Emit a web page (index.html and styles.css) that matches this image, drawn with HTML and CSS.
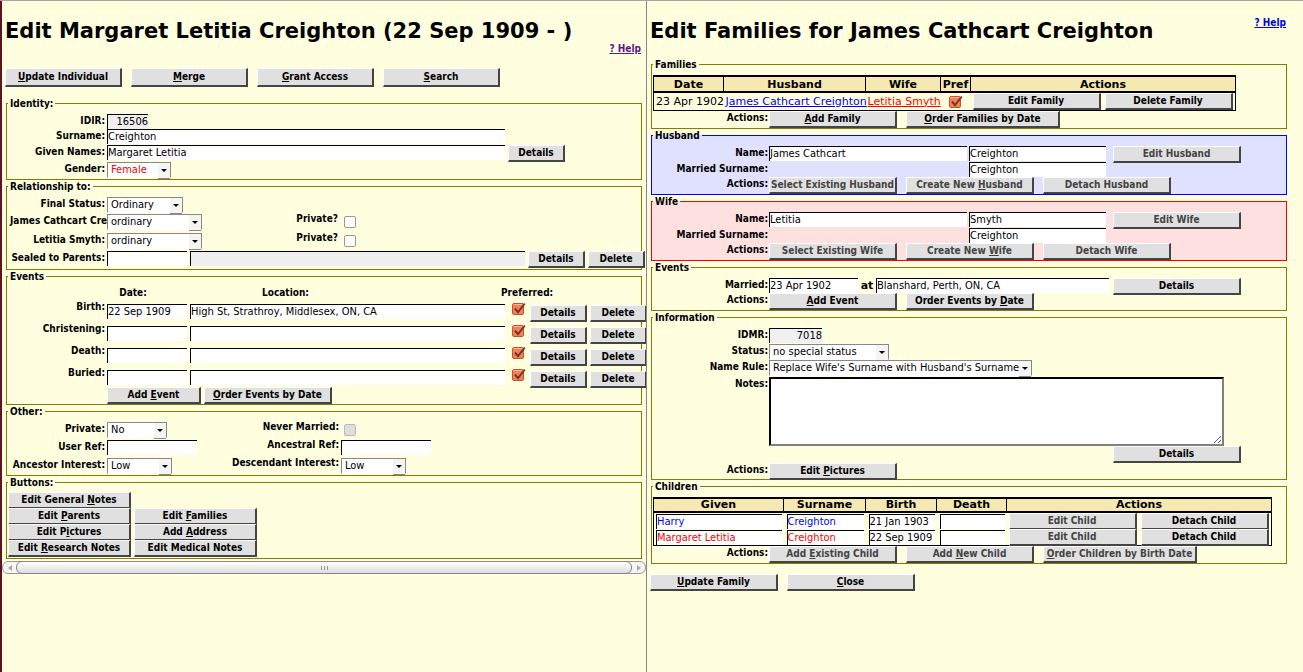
FILE: index.html
```html
<!DOCTYPE html>
<html lang="en">
<head>
<meta charset="utf-8">
<title>Edit Individual</title>
<link rel="stylesheet" href="styles.css">
</head>
<body>
<div class="frames">
<main class="pane person">
  <header class="head">
    <h1>Edit Margaret Letitia Creighton (22 Sep 1909 - )</h1>
    <a class="help visited" href="#help">? Help</a>
  </header>
  <div class="toolbar">
    <button type="button"><u>U</u>pdate Individual</button>
    <button type="button"><u>M</u>erge</button>
    <button type="button"><u>G</u>rant Access</button>
    <button type="button"><u>S</u>earch</button>
  </div>

  <fieldset class="identity">
    <legend>Identity:</legend>
    <div class="row"><label for="idir">IDIR:</label><input id="idir" class="w-id readonly num" value="16506" readonly></div>
    <div class="row"><label for="surname">Surname:</label><input id="surname" class="w-full" value="Creighton"></div>
    <div class="row"><label for="given">Given Names:</label><input id="given" class="w-full" value="Margaret Letitia"><button type="button" class="small">Details</button></div>
    <div class="row"><label for="gender">Gender:</label><span class="select w-gender female"><select id="gender"><option>Female</option><option>Male</option></select></span></div>
  </fieldset>

  <fieldset class="relation">
    <legend>Relationship to:</legend>
    <div class="row"><label for="final">Final Status:</label><span class="select w-final"><select id="final"><option>Ordinary</option></select></span></div>
    <div class="row"><label class="long" for="rel1">James Cathcart Creig</label><span class="select w-rel"><select id="rel1"><option>ordinary</option></select></span><label class="second" for="priv1">Private?</label><input type="checkbox" id="priv1"></div>
    <div class="row"><label for="rel2">Letitia Smyth:</label><span class="select w-rel"><select id="rel2"><option>ordinary</option></select></span><label class="second" for="priv2">Private?</label><input type="checkbox" id="priv2"></div>
    <div class="row"><label for="sealdate">Sealed to Parents:</label><input id="sealdate" class="w-date"><input aria-label="Sealed location" class="w-seal readonly" readonly><button type="button" class="small">Details</button><button type="button" class="small">Delete</button></div>
  </fieldset>

  <fieldset class="events">
    <legend>Events</legend>
    <div class="event-head"><span></span><span>Date:</span><span>Location:</span><span>Preferred:</span></div>
    <div class="row"><label for="birth">Birth:</label><input id="birth" class="w-date" value="22 Sep 1909"><input aria-label="Birth location" class="w-place" value="High St, Strathroy, Middlesex, ON, CA"><input type="checkbox" class="pref" aria-label="Birth preferred" checked><button type="button" class="small">Details</button><button type="button" class="small">Delete</button></div>
    <div class="row"><label for="chris">Christening:</label><input id="chris" class="w-date"><input aria-label="Christening location" class="w-place"><input type="checkbox" class="pref" aria-label="Christening preferred" checked><button type="button" class="small">Details</button><button type="button" class="small">Delete</button></div>
    <div class="row"><label for="death">Death:</label><input id="death" class="w-date"><input aria-label="Death location" class="w-place"><input type="checkbox" class="pref" aria-label="Death preferred" checked><button type="button" class="small">Details</button><button type="button" class="small">Delete</button></div>
    <div class="row"><label for="buried">Buried:</label><input id="buried" class="w-date"><input aria-label="Burial location" class="w-place"><input type="checkbox" class="pref" aria-label="Burial preferred" checked><button type="button" class="small">Details</button><button type="button" class="small">Delete</button></div>
    <div class="event-actions"><button type="button" class="w-add">Add <u>E</u>vent</button><button type="button" class="w-order"><u>O</u>rder Events by Date</button></div>
  </fieldset>

  <fieldset class="other">
    <legend>Other:</legend>
    <div class="row"><label for="private">Private:</label><span class="select w-private"><select id="private"><option>No</option><option>Yes</option></select></span><label class="second" for="never">Never Married:</label><input type="checkbox" id="never" disabled></div>
    <div class="row"><label for="userref">User Ref:</label><input id="userref" class="w-ref"><label class="second" for="ancref">Ancestral Ref:</label><input id="ancref" class="w-ref"></div>
    <div class="row"><label for="ancint">Ancestor Interest:</label><span class="select w-low"><select id="ancint"><option>Low</option></select></span><label class="second" for="desint">Descendant Interest:</label><span class="select w-low"><select id="desint"><option>Low</option></select></span></div>
  </fieldset>

  <fieldset class="buttons">
    <legend>Buttons:</legend>
    <div class="button-grid">
      <button type="button" class="alone">Edit General <u>N</u>otes</button>
      <button type="button">Edit <u>P</u>arents</button>
      <button type="button">Edit <u>F</u>amilies</button>
      <button type="button">Edit P<u>i</u>ctures</button>
      <button type="button">Add <u>A</u>ddress</button>
      <button type="button">Edit <u>R</u>esearch Notes</button>
      <button type="button">Edit Medical Notes</button>
    </div>
  </fieldset>

  <div class="scrollbar">
    <svg width="13" height="13" viewBox="0 0 13 13"><path d="M9 3v6L5 6z" fill="#aaa"/></svg>
    <div class="thumb"><i></i><i></i><i></i></div>
    <svg width="13" height="13" viewBox="0 0 13 13"><path d="M5 3v6l4-3z" fill="#aaa"/></svg>
  </div>
</main>

<section class="pane family">
  <header class="head">
    <h1>Edit Families for James Cathcart Creighton</h1>
    <a class="help" href="#help">? Help</a>
  </header>

  <fieldset class="families">
    <legend>Families</legend>
    <table class="list families-list">
      <colgroup><col class="c-date"><col class="c-husband"><col class="c-wife"><col class="c-pref"><col class="c-actions"></colgroup>
      <thead><tr><th>Date</th><th>Husband</th><th>Wife</th><th>Pref</th><th>Actions</th></tr></thead>
      <tbody><tr>
        <td>23 Apr 1902</td>
        <td><a class="male" href="#husband">James Cathcart Creighton</a></td>
        <td><a class="female" href="#wife">Letitia Smyth</a></td>
        <td class="center"><input type="checkbox" class="pref" aria-label="Preferred" checked></td>
        <td><div class="pair"><button type="button">Edit Family</button><button type="button">Delete Family</button></div></td>
      </tr></tbody>
    </table>
    <div class="row actions"><span class="label">Actions:</span><button type="button"><u>A</u>dd Family</button><button type="button" class="wide"><u>O</u>rder Families by Date</button></div>
  </fieldset>

  <fieldset class="spouse husband">
    <legend>Husband</legend>
    <div class="row"><label for="hname">Name:</label><input id="hname" class="w-given" value="James Cathcart"><input aria-label="Husband surname" class="w-sur" value="Creighton"><button type="button" class="end" disabled>Edit Husband</button></div>
    <div class="row"><label for="hmar">Married Surname:</label><span class="w-given"></span><input id="hmar" class="w-sur" value="Creighton"></div>
    <div class="row actions"><span class="label">Actions:</span><button type="button" disabled>Select Existing Husband</button><button type="button" disabled>Create New <u>H</u>usband</button><button type="button" disabled>Detach Husband</button></div>
  </fieldset>

  <fieldset class="spouse wife">
    <legend>Wife</legend>
    <div class="row"><label for="wname">Name:</label><input id="wname" class="w-given" value="Letitia"><input aria-label="Wife surname" class="w-sur" value="Smyth"><button type="button" class="end" disabled>Edit Wife</button></div>
    <div class="row"><label for="wmar">Married Surname:</label><span class="w-given"></span><input id="wmar" class="w-sur" value="Creighton"></div>
    <div class="row actions"><span class="label">Actions:</span><button type="button" disabled>Select Existing Wife</button><button type="button" disabled>Create New <u>W</u>ife</button><button type="button" disabled>Detach Wife</button></div>
  </fieldset>

  <fieldset class="marriage">
    <legend>Events</legend>
    <div class="row"><label for="married">Married:</label><input id="married" class="w-mdate" value="23 Apr 1902"><label class="at" for="mplace">at</label><input id="mplace" class="w-mplace" value="Blanshard, Perth, ON, CA"><button type="button">Details</button></div>
    <div class="row actions"><span class="label">Actions:</span><button type="button"><u>A</u>dd Event</button><button type="button">Order Events by <u>D</u>ate</button></div>
  </fieldset>

  <fieldset class="information">
    <legend>Information</legend>
    <div class="row"><label for="idmr">IDMR:</label><input id="idmr" class="w-idmr readonly num" value="7018" readonly></div>
    <div class="row"><label for="status">Status:</label><span class="select w-status"><select id="status"><option>no special status</option></select></span></div>
    <div class="row"><label for="rule">Name Rule:</label><span class="select w-rule"><select id="rule"><option>Replace Wife's Surname with Husband's Surname</option></select></span></div>
    <div class="row notes"><label for="notes">Notes:</label><textarea id="notes"></textarea></div>
    <div class="notes-detail"><button type="button">Details</button></div>
    <div class="row actions"><span class="label">Actions:</span><button type="button">Edit <u>P</u>ictures</button></div>
  </fieldset>

  <fieldset class="children">
    <legend>Children</legend>
    <table class="list children-list">
      <colgroup><col class="c-given"><col class="c-surname"><col class="c-birth"><col class="c-death"><col class="c-actions"></colgroup>
      <thead><tr><th>Given</th><th>Surname</th><th>Birth</th><th>Death</th><th>Actions</th></tr></thead>
      <tbody>
        <tr>
          <td><input class="male" aria-label="Given name" value="Harry"></td><td><input class="male" aria-label="Surname" value="Creighton"></td><td><input aria-label="Birth" value="21 Jan 1903"></td><td><input aria-label="Death"></td>
          <td><div class="pair"><button type="button" disabled>Edit Child</button><button type="button">Detach Child</button></div></td>
        </tr>
        <tr>
          <td><input class="female" aria-label="Given name" value="Margaret Letitia"></td><td><input class="female" aria-label="Surname" value="Creighton"></td><td><input aria-label="Birth" value="22 Sep 1909"></td><td><input aria-label="Death"></td>
          <td><div class="pair"><button type="button" disabled>Edit Child</button><button type="button">Detach Child</button></div></td>
        </tr>
      </tbody>
    </table>
    <div class="row actions"><span class="label">Actions:</span><button type="button" disabled>Add <u>E</u>xisting Child</button><button type="button" disabled>Add <u>N</u>ew Child</button><button type="button" class="wide" disabled><u>O</u>rder Children by Birth Date</button></div>
  </fieldset>

  <div class="footer">
    <button type="button"><u>U</u>pdate Family</button>
    <button type="button"><u>C</u>lose</button>
  </div>
</section>
</div>
</body>
</html>
```
FILE: styles.css
```css
* { box-sizing: border-box; }

body {
  margin: 0;
  background: #ffffe0;
  color: #000;
  font: bold 10px/12px "DejaVu Sans Condensed", "DejaVu Sans", sans-serif;
}

.frames {
  display: grid;
  grid-template-columns: minmax(0, 646fr) minmax(0, 657fr);
  min-height: 100vh;
  border-top: 1px solid #aaa49c;
}

.pane { padding: 16px 4px 0; }
.person { border-left: 2px solid #5c1420; }
.family { border-left: 1px solid #888; padding-right: 16px; }

.head {
  display: flex;
  justify-content: space-between;
  height: 41px;
}
.person .head { height: 38px; }
h1 {
  margin: 0 0 0 -1px;
  font: bold 21px/28px "DejaVu Sans", sans-serif;
  white-space: nowrap;
}
.help { color: #0000ee; white-space: nowrap; margin-right: 1px; }
.help.visited { color: #551a8b; align-self: flex-end; }

button {
  flex: none;
  width: 128px;
  height: 17px;
  padding: 0;
  border: solid;
  border-width: 1px 2px 2px 1px;
  border-color: #fff #444 #444 #fff;
  background: #e0e0e0;
  color: #000;
  font: inherit;
  line-height: 12px;
  white-space: nowrap;
}
button:disabled { color: #444; }
button.small { width: 57px; }
button.wide { width: 154px; }

.toolbar {
  display: flex;
  gap: 9px;
  margin: 13px 0 10px -1px;
}
.toolbar button { width: 117px; height: 19px; }

fieldset {
  min-width: 0;
  margin: 0;
  padding: 4px 0 0;
  border: 1px solid #808000;
}
legend {
  height: 13px;
  margin-left: 1px;
  padding: 0 2px;
  line-height: 13px;
}

.row { display: flex; gap: 3px; height: 16px; }
.row > label:first-child,
.label {
  flex: none;
  width: 98px;
  margin-right: -1px;
  text-align: right;
  line-height: 14px;
  white-space: nowrap;
}
.person .row > label.long { padding-left: 3px; text-align: left; }
.family .row > label:first-child,
.label { width: 116px; }
.family .row { gap: 2px; }

input,
textarea,
select {
  font: normal 11px/13px "DejaVu Sans Condensed", "DejaVu Sans", sans-serif;
  color: #000;
}
input {
  flex: none;
  height: 15px;
  margin: 0;
  padding: 0 0 1px;
  border: solid;
  border-width: 1px 0 0 1px;
  border-color: #000;
  border-radius: 0;
  background: #fff;
}
.readonly { background: #f0f0f0; }
.num { text-align: right; }

.select { position: relative; flex: none; height: 16px; }
.select select {
  appearance: none;
  display: block;
  width: 100%;
  height: 16px;
  margin: 0;
  padding: 0 0 1px 3px;
  border: 1px solid #888;
  border-bottom-color: #fff;
  border-radius: 0;
  background: #fff;
}
.select::before {
  content: "";
  position: absolute;
  right: 1px;
  top: 1px;
  width: 12px;
  height: 15px;
  background: #f4f4f2;
  border-bottom: 1px solid #888;
  pointer-events: none;
}
.select::after {
  content: "";
  position: absolute;
  right: 4px;
  top: 7px;
  border: solid transparent;
  border-width: 3px 3px 0;
  border-top-color: #000;
  pointer-events: none;
}
.select.female select,
input.female,
a.female { color: #f00; }
input.male,
a.male { color: #00f; }

input[type="checkbox"] {
  appearance: none;
  width: 12px;
  height: 12px;
  margin: 2px 0 0 3px;
  border: 1px solid #999;
  border-radius: 2px;
}
input[type="checkbox"]:disabled { background: #e0dedc; border-color: #bbb; }
input[type="checkbox"].pref {
  width: 14px;
  height: 14px;
  border: 0;
  background: url("data:image/svg+xml,%3Csvg xmlns='http://www.w3.org/2000/svg' viewBox='0 0 14 14'%3E%3Crect x='.5' y='1.5' width='11' height='11' rx='1.5' fill='%23f48058' stroke='%23c8502c'/%3E%3Cpath d='M1.5 2.5h9' stroke='%23ffb494'/%3E%3Cpath d='M3 6.5l3 3.7L12.8 1.5' fill='none' stroke='%23703828' stroke-width='2'/%3E%3C/svg%3E") no-repeat;
}

.row .second { flex: none; text-align: right; line-height: 10px; }

.w-id { width: 41px; }
.w-full { width: 398px; }
.w-gender { width: 64px; }
.w-final { width: 76px; }
.w-rel { width: 95px; }
.w-date { width: 80px; }
.w-seal { width: 335px; }
.w-place { width: 315px; }
.w-private { width: 60px; }
.w-ref { width: 90px; }
.w-low { width: 65px; }
.w-given { width: 198px; flex: none; }
.w-sur { width: 137px; }
.w-mdate { width: 89px; }
.w-mplace { width: 233px; }
.w-idmr { width: 53px; }
.w-status { width: 120px; }
.w-rule { width: 263px; }

.identity .row:nth-of-type(1) { height: 15px; }
.identity .row:last-child,
.identity .row:nth-of-type(3) { height: 17px; }

.relation .row { height: 18px; }
.relation .row:nth-of-type(1) { height: 17px; }
.relation .row:nth-of-type(2) { height: 19px; }
.relation .second { width: 133px; }

.event-head {
  display: grid;
  grid-template-columns: 100px 52px 253px 1fr;
  height: 17px;
  text-align: center;
  line-height: 12px;
}
.event-head span:last-child { padding-left: 89px; text-align: left; }
.events .row { height: 22px; }
.events .row > label:first-child { line-height: 6px; }
.events .row:nth-last-child(2) { height: 17px; }
.events .pref { margin: -2px 1px 0 4px; }
.events .small { margin-top: 1px; }
.event-actions { display: flex; gap: 3px; padding-left: 100px; }
.w-add { width: 94px; }
.w-order { width: 128px; }

.other .row {
  display: grid;
  grid-template-columns: 97px 90px 138px auto;
  justify-content: start;
  align-items: start;
  height: 18px;
}
.other .row:last-child { height: 17px; }
.other .second { margin-right: -1px; }

.button-grid {
  display: grid;
  grid-template-columns: 123px 123px;
  column-gap: 3px;
  grid-auto-rows: 16px;
  padding: 0 0 2px 1px;
}
.buttons { padding-top: 3px; }
.button-grid button { width: auto; height: 17px; }
.button-grid .alone { margin-right: 126px; grid-column: 1 / 3; }

.scrollbar {
  display: flex;
  height: 13px;
  margin: 2px -4px 0;
  border: 1px solid #999;
  border-radius: 6px;
  background: #f4f4f2;
}
.scrollbar svg { flex: none; }
.thumb {
  display: flex;
  flex: 1;
  gap: 2px;
  align-items: center;
  justify-content: center;
  margin: -1px 0;
  border: 1px solid #888;
  border-radius: 6px;
  background: linear-gradient(#fff, #ddd);
}
.thumb i { width: 1px; height: 4px; background: #999; }

.list {
  margin-left: 1px;
  border-collapse: collapse;
  table-layout: fixed;
  border: 1px solid #000;
}
.families-list { width: 583px; }
.children-list { width: 619px; }
.list th {
  height: 16px;
  padding: 0;
  border: 1px solid #000;
  border-width: 2px 1px;
  background: #f5e8b0;
  font: bold 11px/13px "DejaVu Sans", sans-serif;
}
.list td {
  height: 16px;
  padding: 0 2px;
  font: normal 11px/14px "DejaVu Sans", sans-serif;
  white-space: nowrap;
}
.families-list td { height: 18px; }
.list input { display: block; width: 100%; }
.list .pref { display: inline-block; margin: 0; vertical-align: middle; }
.center { text-align: center; }
.c-date { width: 70px; }
.c-husband { width: 142px; }
.c-wife { width: 75px; }
.c-pref { width: 30px; }
.c-given { width: 130px; }
.c-surname { width: 82px; }
.c-birth { width: 71px; }
.c-death { width: 70px; }
.pair {
  display: flex;
  gap: 4px;
  font: bold 10px/12px "DejaVu Sans Condensed", "DejaVu Sans", sans-serif;
}
.families-list .pair { height: 17px; }
.children-list .pair { height: 16px; }
.children-list th { height: 14px; line-height: 12px; }
.children-list td + td { padding-left: 3px; }
.children-list td:last-child { padding-left: 2px; }

.family .actions { gap: 9px; height: 17px; }
.actions .label { margin-right: -8px; }
.row .end { margin-left: 5px; }

.spouse .row:nth-of-type(2) { height: 15px; }
.husband { border-color: #00f; background: #e0e0ff; }
.wife { border-color: #f00; background: #ffe0e0; }

.marriage .row:nth-of-type(1) { height: 15px; }
.row .at { width: 14px; font: bold 11px/15px "DejaVu Sans", sans-serif; text-align: center; }
.row .w-mplace { margin-right: 2px; }

.information .notes { height: 70px; padding-top: 1px; }
.information .actions { height: 16px; }
.notes textarea {
  width: 455px;
  height: 69px;
  padding: 1px;
  border: 2px solid;
  border-color: #000 #808080 #808080 #000;
}
.notes-detail { display: flex; padding-left: 461px; }

.footer { display: flex; gap: 9px; margin: 10px 0 0 -1px; }
```
